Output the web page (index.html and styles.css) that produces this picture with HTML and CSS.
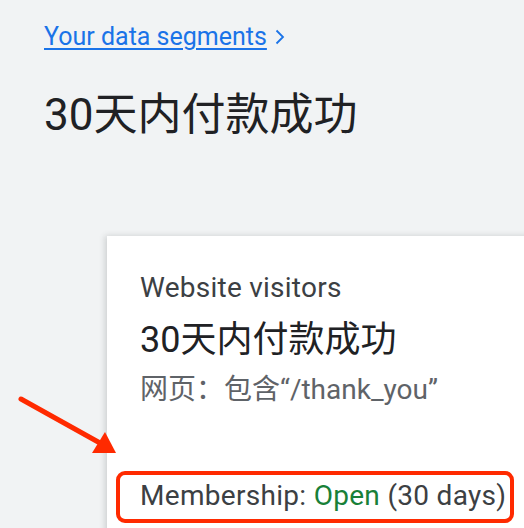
FILE: index.html
```html
<!DOCTYPE html>
<html lang="zh">
<head>
<meta charset="utf-8">
<link rel="stylesheet" href="styles.css">
</head>
<body>
<div class="page">
  <a class="crumb" href="#"><span class="crumb-text">Your data segments</span><svg class="chev" viewBox="0 0 10 16" width="10" height="16"><path d="M1.5 1.5 L8 8 L1.5 14.5" fill="none" stroke="#1a73e8" stroke-width="1.8"/></svg></a>
  <h1 class="title">30天内付款成功</h1>
  <div class="card">
    <div class="card-kicker">Website visitors</div>
    <div class="card-title">30天内付款成功</div>
    <div class="card-rule">网页：包含“/thank_you”</div>
    <div class="membership">Membership:&nbsp;<span class="open">Open</span>&nbsp;(30 days)</div>
  </div>
  <svg class="arrow" width="130" height="80" viewBox="0 0 130 80">
    <line x1="21" y1="19" x2="100" y2="63" stroke="#ff2a00" stroke-width="5" stroke-linecap="round"/>
    <polygon points="92,73 105,52 116,73" fill="#ff2a00"/>
  </svg>
</div>
</body>
</html>
```
FILE: styles.css
```css
html, body {
  margin: 0;
  padding: 0;
}
body {
  background: #f1f3f4;
  font-family: Roboto, "Noto Sans CJK SC", sans-serif;
  width: 524px;
  height: 528px;
  overflow: hidden;
}
.page {
  position: relative;
  padding: 22px 0 0 44px;
  height: 528px;
  box-sizing: border-box;
  overflow: hidden;
}
.crumb {
  display: flex;
  width: max-content;
  align-items: center;
  gap: 8px;
  color: #1a73e8;
  font-size: 25px;
  line-height: 30px;
  text-decoration: none;
}
.crumb-text {
  text-decoration: underline;
  text-underline-offset: 3px;
  text-decoration-thickness: 1.5px;
}
.title {
  margin: 37px 0 0 0;
  font-weight: 400;
  font-size: 44px;
  line-height: 52px;
  color: #202124;
}
.card {
  margin: 95px 0 0 63px;
  width: 480px;
  height: 320px;
  background: #fff;
  box-shadow: -2px 0 6px rgba(60, 64, 67, 0.2);
  padding: 35px 0 0 33px;
}
.card-kicker {
  font-size: 28px;
  line-height: 34px;
  letter-spacing: 0.25px;
  color: #3c4043;
}
.card-title {
  margin-top: 13px;
  font-size: 36px;
  line-height: 44px;
  color: #202124;
}
.card-rule {
  margin-top: 11px;
  font-size: 28px;
  line-height: 34px;
  color: #5f6368;
}
.membership {
  display: flex;
  width: max-content;
  margin: 64px 0 0 -24px;
  padding: 5px 4px 7px 20px;
  border: 4px solid #ff2a00;
  border-radius: 9px;
  font-size: 28px;
  line-height: 32px;
  letter-spacing: 0.3px;
  color: #3c4043;
  white-space: pre;
}
.open {
  color: #188038;
}
.arrow {
  position: absolute;
  left: 0;
  top: 380px;
}
```
